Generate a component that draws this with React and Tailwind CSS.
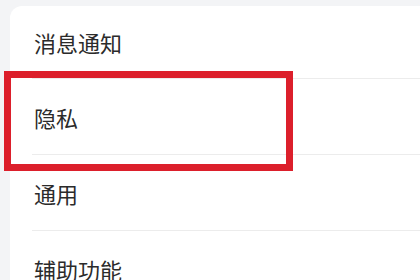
// Settings list with a highlighted "隐私" row
const rows = ['消息通知', '隐私', '通用', '辅助功能'];

export default function App() {
  return (
    <div
      className="relative h-[280px] w-[420px] overflow-hidden bg-[#f3f4f6] pl-[10px] pt-[6px]"
      style={{ fontFamily: '"Noto Sans CJK SC", "Noto Sans", sans-serif' }}
    >
      <div className="rounded-tl-xl bg-white">
        {rows.map((label, i) => (
          <div key={label} className={`flex items-center pl-[22px] ${i === 0 ? 'h-[73px]' : 'h-[76px]'}`}>
            <div
              className={`flex h-full flex-1 items-center ${
                i === rows.length - 1 ? '' : 'border-b border-[#ececec]'
              }`}
            >
              <span className="pl-[2px] text-[22px] leading-none text-[#2b2b2b]">{label}</span>
            </div>
          </div>
        ))}
      </div>

      {/* red highlight around the privacy row */}
      <div className="absolute left-[4px] top-[71px] h-[100px] w-[289px] border-[7px] border-[#dc1f2b]" />
    </div>
  );
}
